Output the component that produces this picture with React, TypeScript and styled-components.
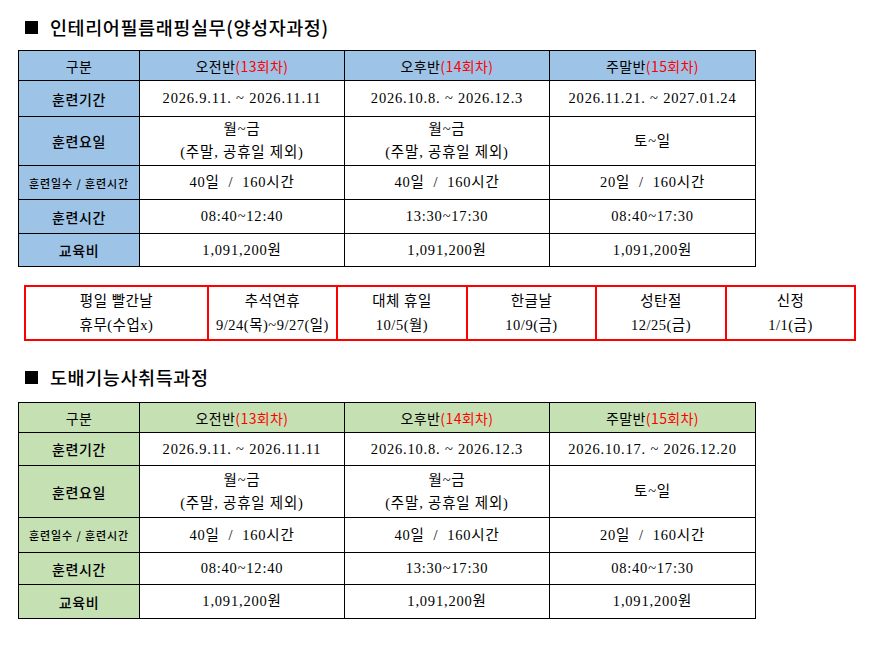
import React from "react";
import styled, { createGlobalStyle } from "styled-components";

const Global = createGlobalStyle`
  html, body { margin: 0; padding: 0; background: #ffffff; }
  body { font-family: "Noto Sans CJK KR", sans-serif; color: #000; }
`;

const Page = styled.div`
  width: 894px;
  height: 646px;
  padding: 14px 0 0 18px;
  box-sizing: border-box;
  display: flex;
  flex-direction: column;
`;

const Heading = styled.h2<{ $gap: number }>`
  margin: 0 0 ${(p) => p.$gap}px 7px;
  height: 26px;
  display: flex;
  align-items: center;
  gap: 12px;
  font-family: "Noto Sans CJK KR", sans-serif;
  font-weight: 500;
  font-size: 18.5px;
  line-height: 26px;
  letter-spacing: 0.6px;
`;

const Square = styled.span`
  display: inline-block;
  width: 13px;
  height: 13px;
  background: #000;
`;

const Table = styled.table`
  border-collapse: collapse;
  table-layout: fixed;
  width: 737px;
  border: 1.5px solid #000;
`;

const Row = styled.tr<{ $h: number }>`
  height: ${(p) => p.$h}px;
`;

const HeadCell = styled.th<{ $bg: string }>`
  background: ${(p) => p.$bg};
  border: 1px solid #000;
  padding: 0;
  font-family: "Noto Sans CJK KR", sans-serif;
  font-weight: 400;
  font-size: 14px;
  line-height: 18px;
  letter-spacing: 0.4px;
  text-align: center;
  vertical-align: middle;
`;

const LabelCell = styled.th<{ $bg: string; $small?: boolean }>`
  background: ${(p) => p.$bg};
  border: 1px solid #000;
  padding: 0;
  font-family: "Noto Sans CJK KR", sans-serif;
  font-weight: 500;
  font-size: ${(p) => (p.$small ? "11px" : "14px")};
  letter-spacing: ${(p) => (p.$small ? "0.9px" : "0.6px")};
  line-height: 18px;
  text-align: center;
  vertical-align: middle;
  white-space: pre;
`;

const Cell = styled.td`
  border: 1px solid #000;
  padding: 0;
  font-family: "Liberation Serif", "Noto Sans CJK KR", serif;
  font-size: 14.5px;
  line-height: 23px;
  letter-spacing: 0.8px;
  text-align: center;
  vertical-align: middle;
  white-space: pre;
`;

const Red = styled.span`
  color: #ff0000;
`;

const HolidayTable = styled.table`
  border-collapse: collapse;
  table-layout: fixed;
  width: 830px;
  margin: 18px 0 23px 6px;
  border: 2px solid #ff0000;
`;

const HolidayCell = styled.td`
  border: 2px solid #ff0000;
  height: 52px;
  padding: 0;
  font-family: "Liberation Serif", "Noto Sans CJK KR", serif;
  font-size: 14.5px;
  line-height: 24px;
  letter-spacing: 0.5px;
  text-align: center;
  vertical-align: middle;
  white-space: pre;
`;

type Course = {
  title: string;
  bg: string;
  heights: number[];
  weekend: string;
  gap: number;
};

const COLS = [
  { name: "오전반", n: "(13회차)" },
  { name: "오후반", n: "(14회차)" },
  { name: "주말반", n: "(15회차)" },
];

function CourseTable({ c }: { c: Course }) {
  const periods = ["2026.9.11. ~ 2026.11.11", "2026.10.8. ~ 2026.12.3", c.weekend];
  const days = ["월~금\n(주말, 공휴일 제외)", "월~금\n(주말, 공휴일 제외)", "토~일"];
  const counts = ["40일  /  160시간", "40일  /  160시간", "20일  /  160시간"];
  const times = ["08:40~12:40", "13:30~17:30", "08:40~17:30"];
  const fee = ["1,091,200원", "1,091,200원", "1,091,200원"];
  const rows: { label: string; small?: boolean; vals: string[] }[] = [
    { label: "훈련기간", vals: periods },
    { label: "훈련요일", vals: days },
    { label: "훈련일수 / 훈련시간", small: true, vals: counts },
    { label: "훈련시간", vals: times },
    { label: "교육비", vals: fee },
  ];
  return (
    <>
      <Heading $gap={c.gap}>
        <Square />
        {c.title}
      </Heading>
      <Table>
        <colgroup>
          <col style={{ width: 121 }} />
          <col style={{ width: 205 }} />
          <col style={{ width: 205 }} />
          <col style={{ width: 206 }} />
        </colgroup>
        <tbody>
          <Row $h={c.heights[0]}>
            <HeadCell $bg={c.bg}>구분</HeadCell>
            {COLS.map((col) => (
              <HeadCell $bg={c.bg} key={col.name}>
                {col.name}
                <Red>{col.n}</Red>
              </HeadCell>
            ))}
          </Row>
          {rows.map((r, i) => (
            <Row $h={c.heights[i + 1]} key={r.label}>
              <LabelCell $bg={c.bg} $small={r.small}>
                {r.label}
              </LabelCell>
              {r.vals.map((v, j) => (
                <Cell key={j}>{v}</Cell>
              ))}
            </Row>
          ))}
        </tbody>
      </Table>
    </>
  );
}

const HOLIDAYS = [
  "평일 빨간날\n휴무(수업x)",
  "추석연휴\n9/24(목)~9/27(일)",
  "대체 휴일\n10/5(월)",
  "한글날\n10/9(금)",
  "성탄절\n12/25(금)",
  "신정\n1/1(금)",
];
const HOLIDAY_W = [183, 129, 130, 129, 130, 129];

export default function App() {
  return (
    <Page>
      <Global />
      <CourseTable
        c={{
          title: "인테리어필름래핑실무(양성자과정)",
          bg: "#9dc3e6",
          heights: [30, 36, 49, 34, 34, 33],
          weekend: "2026.11.21. ~ 2027.01.24",
          gap: 10,
        }}
      />
      <HolidayTable>
        <colgroup>
          {HOLIDAY_W.map((w, i) => (
            <col key={i} style={{ width: w }} />
          ))}
        </colgroup>
        <tbody>
          <tr>
            {HOLIDAYS.map((h) => (
              <HolidayCell key={h}>{h}</HolidayCell>
            ))}
          </tr>
        </tbody>
      </HolidayTable>
      <CourseTable
        c={{
          title: "도배기능사취득과정",
          bg: "#c5e0b3",
          heights: [30, 33, 52, 35, 32, 34],
          weekend: "2026.10.17. ~ 2026.12.20",
          gap: 12,
        }}
      />
    </Page>
  );
}
